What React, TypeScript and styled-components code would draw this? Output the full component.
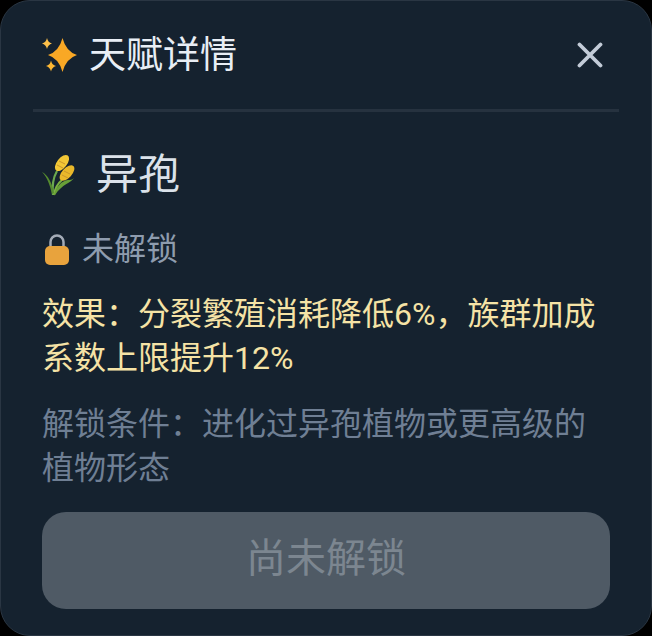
import styled, { createGlobalStyle } from "styled-components";

const GlobalStyle = createGlobalStyle`
  html, body {
    margin: 0;
    padding: 0;
    background: #000;
  }
  body {
    font-family: Roboto, "Noto Sans CJK SC", "Noto Sans", sans-serif;
  }
`;

const effectText = "效果\uFF1A分裂繁殖消耗降低6%\uFF0C族群加成系数上限提升12%";
const conditionText = "解锁条件\uFF1A进化过异孢植物或更高级的植物形态";

const Panel = styled.div`
  box-sizing: border-box;
  width: 652px;
  height: 636px;
  overflow: hidden;
  padding: 0 41px;
  background: #15222f;
  border: 1px solid #2a3643;
  border-radius: 30px;
  display: flex;
  flex-direction: column;
`;

const Header = styled.div`
  height: 108px;
  margin: 0 -9px;
  padding: 0 9px 0 8px;
  border-bottom: 3px solid #26323f;
  display: flex;
  align-items: center;
  justify-content: space-between;
  flex-shrink: 0;
`;

const HeaderTitle = styled.div`
  display: flex;
  align-items: center;
  gap: 12px;
  font-size: 37px;
  line-height: 1;
  color: #e8eef5;
`;

const CloseButton = styled.button`
  all: unset;
  display: flex;
  margin-right: 7px;
  color: #c3ccd8;
`;

const NameRow = styled.div`
  display: flex;
  align-items: center;
  gap: 19px;
  margin-top: 39px;
  height: 50px;
  padding-bottom: 2px;
  box-sizing: border-box;
  font-size: 42px;
  line-height: 48px;
  color: #dbe2ea;
`;

const StatusRow = styled.div`
  display: flex;
  align-items: center;
  gap: 13px;
  margin-top: 26px;
  padding-left: 3px;
  height: 44px;
  font-size: 32px;
  line-height: 44px;
  color: #8e9cae;
`;

const Paragraph = styled.p<{ $tone: string; $top: number }>`
  margin: ${(p) => p.$top}px 0 0;
  font-size: 32px;
  line-height: 44px;
  color: ${(p) => p.$tone};
`;

const UnlockButton = styled.button`
  all: unset;
  box-sizing: border-box;
  margin-top: 22px;
  height: 97px;
  width: 568px;
  flex-shrink: 0;
  display: flex;
  align-items: center;
  justify-content: center;
  padding-bottom: 12px;
  border-radius: 24px;
  background: #4f5a65;
  font-size: 40px;
  color: #7c8690;
`;

const Sparkles = () => (
  <svg width="36" height="36" viewBox="0 0 36 36">
    <path d="M21.500 1Q25 14.500 36 18 25 21.500 21.500 35 18 21.500 7 18 18 14.500 21.500 1z" fill="#f9a825" />
    <path d="M6 1Q7 5.500 11 6.500 7 7.500 6 12 5 7.500 1 6.500 5 5.500 6 1z" fill="#fdc04a" />
    <path d="M10 23.500Q11 28 15 29 11 30 10 34.500 9 30 5 29 9 28 10 23.500z" fill="#fdb733" />
  </svg>
);

const Close = () => (
  <svg width="26" height="26" viewBox="0 0 26 26">
    <path d="M2.500 2.500l21 21M23.500 2.500l-21 21" stroke="currentColor" strokeWidth="3.800" strokeLinecap="round" />
  </svg>
);

const Rice = () => (
  <svg width="35" height="42" viewBox="0 0 35 42">
    <path d="M11 41C10 32 11 24 15 17" stroke="#6aa84f" strokeWidth="2.200" fill="none" />
    <path d="M12 41C13 34 15 30 20 26" stroke="#7cb342" strokeWidth="2.200" fill="none" />
    <path d="M10 40C8 31 5 23 0 18c6 3 10 11 12 21z" fill="#558b2f" />
    <path d="M12 41c2-8 7-14 14-15 2 0 4 0 6-2-3 5-12 6-19 17z" fill="#689f38" />
    <ellipse cx="20" cy="9" rx="5" ry="9.500" transform="rotate(38 20 9)" fill="#f2c736" />
    <ellipse cx="25" cy="19" rx="5" ry="9.500" transform="rotate(42 25 19)" fill="#e9b82a" />
    <path d="M17 7l6 3M15 11l6 3M22 17l6 3M20 21l6 3" stroke="#c9962a" strokeWidth="1" />
  </svg>
);

const Lock = () => (
  <svg width="24" height="31" viewBox="0 0 24 31">
    <path d="M5.500 13V8a6.500 6.500 0 0 1 13 0v5" stroke="#a3abb7" strokeWidth="2.500" fill="none" />
    <rect y="12" width="24" height="19" rx="5" fill="#e8a33d" />
  </svg>
);

export default function App() {
  return (
    <>
      <GlobalStyle />
      <Panel>
        <Header>
          <HeaderTitle>
            <Sparkles />
            天赋详情
          </HeaderTitle>
          <CloseButton>
            <Close />
          </CloseButton>
        </Header>
        <NameRow>
          <Rice />
          异孢
        </NameRow>
        <StatusRow>
          <Lock />
          未解锁
        </StatusRow>
        <Paragraph $tone="#f5e3a6" $top={21}>
          {effectText}
        </Paragraph>
        <Paragraph $tone="#6f7f94" $top={22}>
          {conditionText}
        </Paragraph>
        <UnlockButton>尚未解锁</UnlockButton>
      </Panel>
    </>
  );
}
